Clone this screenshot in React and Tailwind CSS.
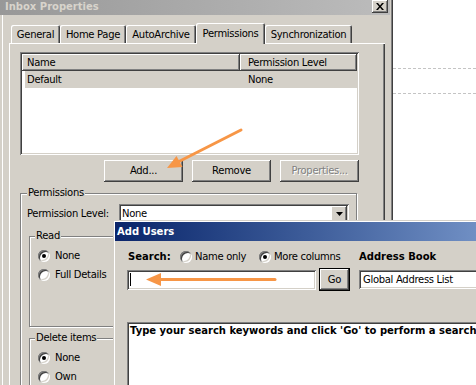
import React from 'react';

const raised =
  'bg-[#d4d0c8] shadow-[inset_-1px_-1px_#404040,inset_1px_1px_#ffffff,inset_-2px_-2px_#808080]';
const sunken =
  'bg-white shadow-[inset_1px_1px_#808080,inset_-1px_-1px_#ffffff,inset_2px_2px_#404040,inset_-2px_-2px_#d4d0c8]';

export default function App() {
  return (
    <div className="relative w-[476px] h-[385px] overflow-hidden bg-white flex font-['DejaVu_Sans',sans-serif] text-[10px] leading-[12px] tracking-[-0.3px] text-black">
      <PropertiesWindow />
      <div className="flex-1">
        <div className="mt-[68px] h-[26px] border-y border-dashed border-[#c4c4c4]" />
      </div>
      <AddUsersWindow />
      <Arrows />
    </div>
  );
}

function PropertiesWindow() {
  return (
    <div className="w-[393px] h-full shrink-0 flex flex-col bg-[#d4d0c8] border-r border-r-[#404040] shadow-[inset_-1px_0_#808080]">
      {/* title bar */}
      <div className="h-[15px] w-[390px] shrink-0 flex items-start justify-between bg-linear-to-r from-[#989898] to-[#bcbcbc]">
        <span className="pl-[5px] pt-[1px] font-bold tracking-normal text-[#d8d4cc]">Inbox Properties</span>
        <div className={`mr-[2px] w-[16px] h-[13px] flex items-center justify-center ${raised}`}>
          <svg width="8" height="7" viewBox="0 0 8 7">
            <path d="M0 0h2l2 2.4L6 0h2L5 3.5 8 7H6L4 4.6 2 7H0l3-3.5z" fill="#000" />
          </svg>
        </div>
      </div>

      <div className="flex-1 min-h-0 flex flex-col pt-[8px] pl-[9px] shadow-[inset_2px_0_#d4d0c8,inset_3px_0_#ffffff]">
        {/* tabs */}
        <div className="shrink-0 flex items-end pl-[2px] h-[20px]">
          <Tab width="w-[49px]" label="General" />
          <Tab width="w-[66px]" label="Home Page" />
          <Tab width="w-[70px]" label="AutoArchive" />
          <Tab width="w-[69px]" label="Permissions" selected />
          <Tab width="w-[87px]" label="Synchronization" />
        </div>

        {/* tab page */}
        <div className="w-[376px] flex-1 min-h-0 pl-[11px] pt-[9px] shadow-[inset_1px_1px_#ffffff,inset_-1px_0_#404040,inset_-2px_0_#808080]">
          <div className="w-[339px] flex flex-col">
            <div className={`h-[103px] shrink-0 p-[2px] flex flex-col ${sunken}`}>
              <div className="flex h-[17px] shrink-0">
                <div className={`w-[218px] pl-[5px] flex items-center ${raised}`}>Name</div>
                <div className={`flex-1 pl-[8px] flex items-center ${raised}`}>Permission Level</div>
              </div>
              <div className="ml-[3px] h-[17px] shrink-0 bg-[#d4d0c8] flex items-center">
                <span className="w-[223px] pl-[2px]">Default</span>
                <span>None</span>
              </div>
            </div>

            <div className="mt-[5px] shrink-0 flex justify-end gap-[9px]">
              <Button>Add...</Button>
              <Button>Remove</Button>
              <Button disabled>Properties...</Button>
            </div>

            <fieldset className="mt-[5px] shrink-0 w-[337px] h-[220px] border border-[#808080] shadow-[inset_1px_1px_#ffffff,1px_1px_#ffffff]">
              <legend className="ml-[6px] px-[1px] bg-[#d4d0c8]">Permissions</legend>
              <div className="mt-[5px] flex items-center">
                <span className="w-[98px] shrink-0 pl-[6px]">Permission Level:</span>
                <div className={`w-[230px] h-[20px] shrink-0 flex items-center justify-between pl-[3px] pr-[2px] ${sunken}`}>
                  <span>None</span>
                  <div className={`w-[16px] h-[16px] flex items-center justify-center ${raised}`}>
                    <svg width="7" height="4" viewBox="0 0 7 4">
                      <path d="M0 0h7L3.5 4z" fill="#000" />
                    </svg>
                  </div>
                </div>
              </div>

              <fieldset className="mt-[6px] ml-[8px] w-[150px] h-[97px] border border-[#808080] shadow-[inset_1px_1px_#ffffff,1px_1px_#ffffff]">
                <legend className="ml-[5px] px-[1px] bg-[#d4d0c8]">Read</legend>
                <div className="mt-[7px] pl-[8px] flex flex-col gap-[5px]">
                  <RadioRow checked label="None" />
                  <RadioRow label="Full Details" />
                </div>
              </fieldset>

              <fieldset className="mt-[5px] ml-[8px] w-[150px] h-[97px] border border-[#808080] shadow-[inset_1px_1px_#ffffff,1px_1px_#ffffff]">
                <legend className="ml-[5px] px-[1px] bg-[#d4d0c8]">Delete items</legend>
                <div className="mt-[7px] pl-[8px] flex flex-col gap-[5px]">
                  <RadioRow checked label="None" />
                  <RadioRow label="Own" />
                </div>
              </fieldset>
            </fieldset>
          </div>
        </div>
      </div>
    </div>
  );
}

function Tab({ label, width, selected }) {
  if (selected) {
    return (
      <div className={`relative z-10 -mb-px h-[21px] shrink-0 ${width} bg-[#d4d0c8] rounded-t-[2px] flex items-center justify-center shadow-[inset_1px_1px_#ffffff,inset_-1px_0_#404040,inset_-2px_0_#808080]`}>
        {label}
      </div>
    );
  }
  return (
    <div className={`h-[18px] shrink-0 ${width} rounded-t-[2px] flex items-center justify-center pt-[1px] shadow-[inset_1px_1px_#ffffff,inset_-1px_0_#404040,inset_-2px_0_#808080]`}>
      {label}
    </div>
  );
}

function Button({ children, disabled }) {
  return (
    <div
      className={`w-[79px] h-[22px] shrink-0 flex items-center justify-center ${raised} ${
        disabled ? 'text-[#808080] [text-shadow:1px_1px_#ffffff]' : ''
      }`}
    >
      {children}
    </div>
  );
}

function Radio({ checked }) {
  return (
    <span className="w-[12px] h-[12px] shrink-0 rounded-full bg-white flex items-center justify-center shadow-[inset_1px_1px_#808080,inset_-1px_-1px_#ffffff,inset_2px_2px_#404040,inset_-2px_-2px_#d4d0c8]">
      {checked && <span className="w-[4px] h-[4px] rounded-full bg-black" />}
    </span>
  );
}

function RadioRow({ checked, label }) {
  return (
    <div className="h-[14px] flex items-center">
      <Radio checked={checked} />
      <span className="ml-[5px] whitespace-nowrap">{label}</span>
    </div>
  );
}

function AddUsersWindow() {
  return (
    <div className="absolute left-[113px] top-[220px] w-[380px] h-[180px] pl-[2px] pt-[2px] flex flex-col bg-[#d4d0c8] shadow-[inset_1px_1px_#d4d0c8,inset_2px_2px_#ffffff]">
      <div className="h-[19px] shrink-0 pl-[2px] flex items-center bg-linear-to-r from-[#0a246a] to-[#7594c8] text-white font-bold tracking-normal">
        Add Users
      </div>
      <div className="pl-[12px] pt-[9px] flex flex-col">
        <div className="h-[14px] flex items-center whitespace-nowrap">
          <span className="w-[53px] shrink-0 pl-[1px] font-bold tracking-normal">Search:</span>
          <div className="w-[79px] shrink-0 flex items-center">
            <Radio />
            <span className="ml-[3px]">Name only</span>
          </div>
          <div className="w-[100px] shrink-0 flex items-center">
            <Radio checked />
            <span className="ml-[3px]">More columns</span>
          </div>
          <span className="shrink-0 font-bold tracking-normal">Address Book</span>
        </div>

        <div className="mt-[4px] h-[23px] flex items-center">
          <div className={`w-[189px] h-[20px] shrink-0 pl-[3px] flex items-center ${sunken}`}>
            <div className="w-px h-[13px] bg-black" />
          </div>
          <div className="ml-[3px] w-[31px] h-[23px] shrink-0 border border-black">
            <div className={`w-full h-full flex items-center justify-center ${raised}`}>Go</div>
          </div>
          <div className={`ml-[9px] w-[200px] h-[19px] shrink-0 pl-[4px] flex items-center whitespace-nowrap ${sunken}`}>
            Global Address List
          </div>
        </div>

        <div className={`mt-[31px] w-[360px] h-[100px] shrink-0 pl-[3px] pt-[3px] font-bold tracking-normal whitespace-nowrap ${sunken}`}>
          Type your search keywords and click 'Go' to perform a search
        </div>
      </div>
    </div>
  );
}

function Arrows() {
  return (
    <svg className="absolute inset-0 pointer-events-none" width="476" height="385" viewBox="0 0 476 385">
      <line x1="241" y1="130" x2="178" y2="162" stroke="#f79646" strokeWidth="3" strokeLinecap="round" />
      <polygon points="167,168 176.5,156 182.5,167" fill="#f79646" />
      <line x1="275" y1="279.5" x2="158" y2="279.5" stroke="#f79646" strokeWidth="3" strokeLinecap="round" />
      <polygon points="146,279.5 161,273 161,286" fill="#f79646" />
    </svg>
  );
}
